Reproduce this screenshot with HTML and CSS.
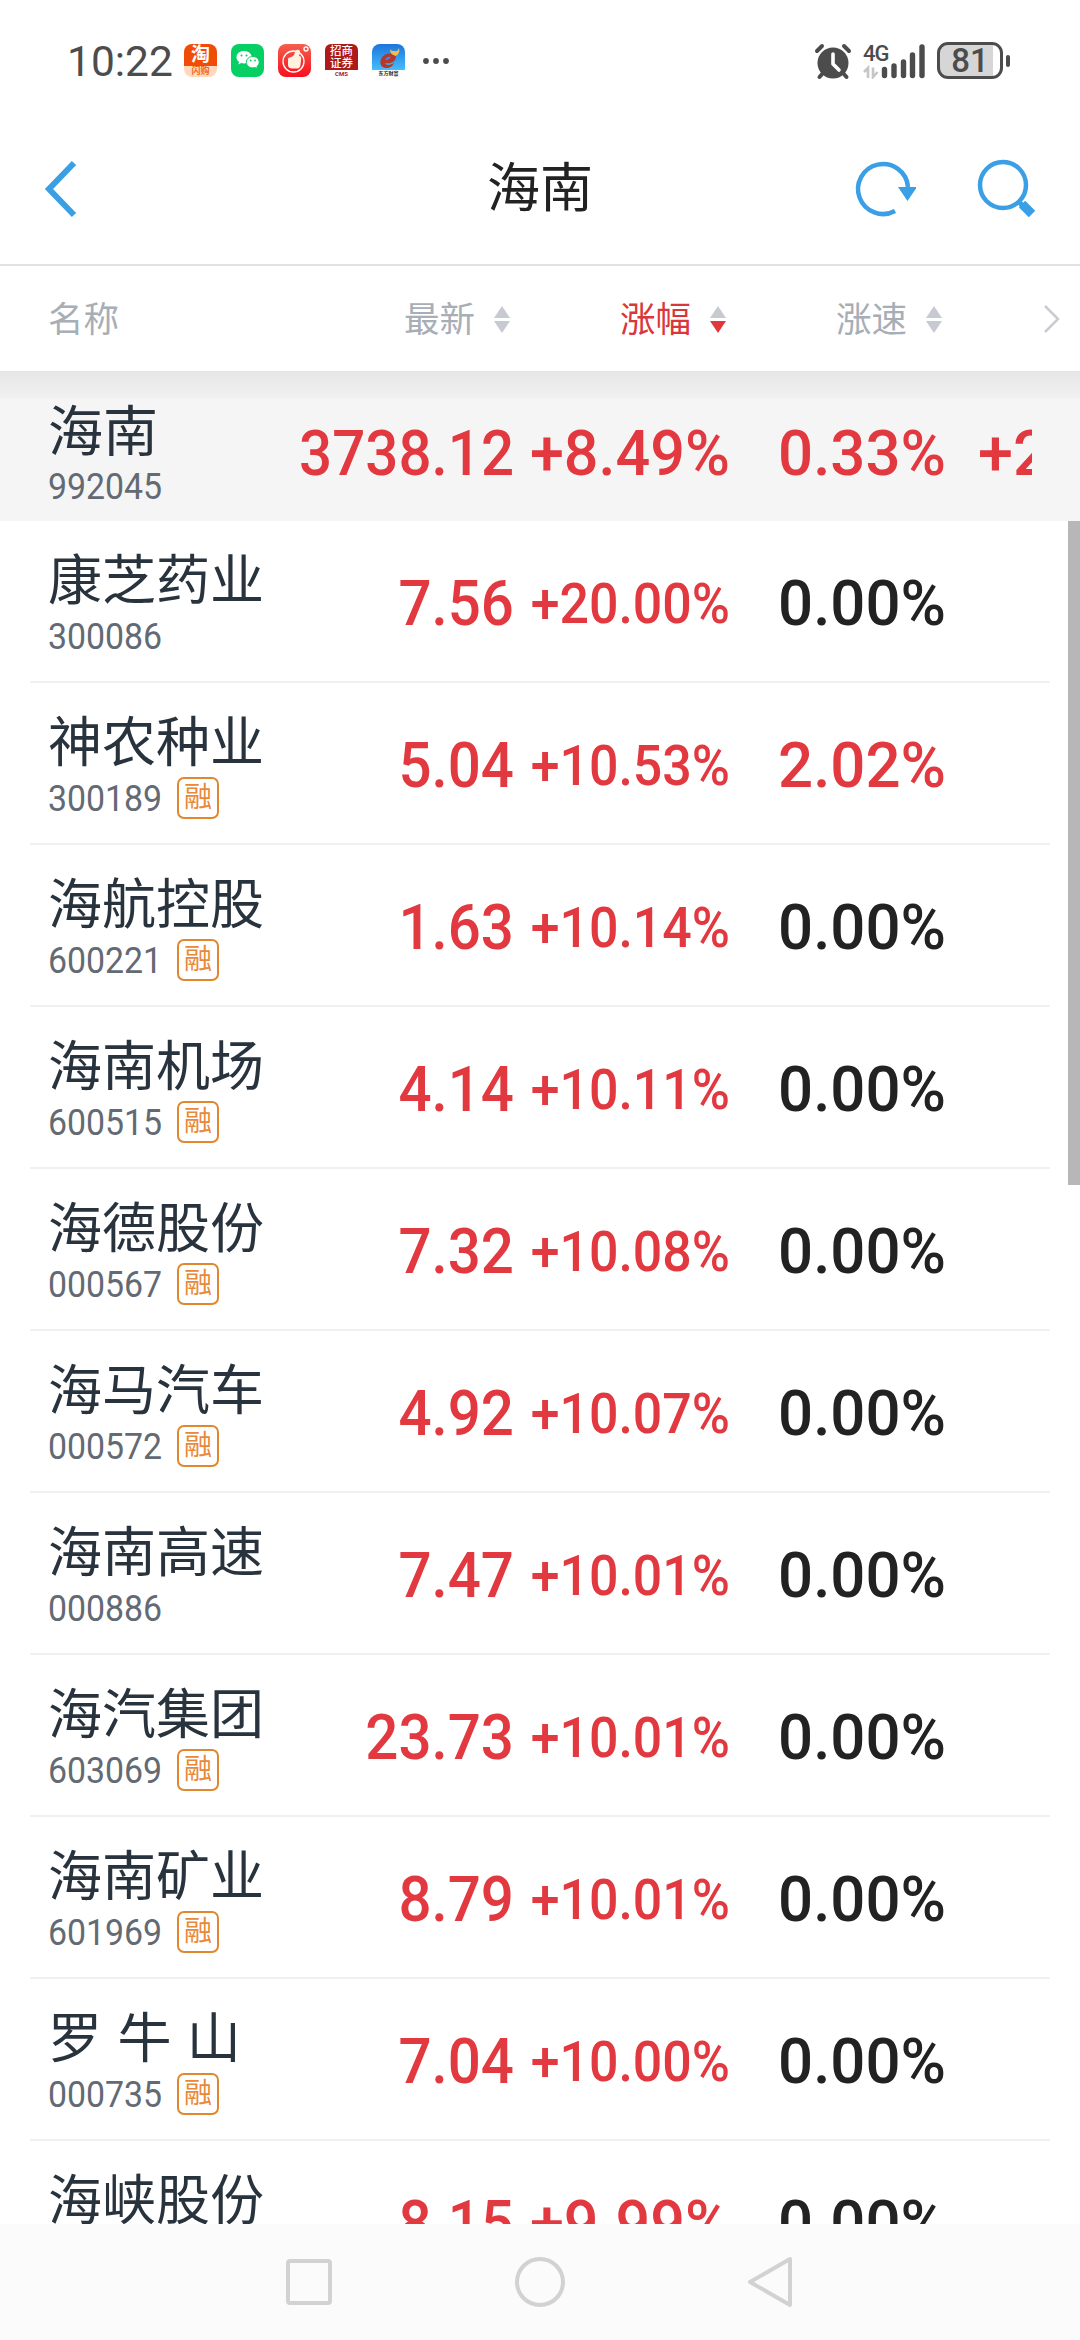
FILE: index.html
```html
<!DOCTYPE html>
<html lang="zh-CN">
<head>
  <meta charset="UTF-8" />
  <meta name="viewport" content="width=device-width, initial-scale=1.0" />
  <title>海南</title>
  <link rel="stylesheet" href="styles.css">
</head>
<body>

<div class="status-bar">
  <span class="clock">10:22</span>
  <div class="apps">
    <div class="app app-taobao"><b>淘</b><i>闪购</i></div>
    <div class="app app-wechat">
      <svg width="33" height="33" viewBox="0 0 33 33">
        <path d="M13 7C8.500 7 5.500 9.700 5.500 13.200c0 2 1 3.600 2.600 4.700l-.8 2.600 3-1.400c.9.300 1.800.4 2.700.4 4.500 0 7.700-2.700 7.700-6.200S17.500 7 13 7z" fill="#fff"/>
        <path d="M21.800 12.500c-3.700 0-6.400 2.500-6.400 5.700s2.700 5.700 6.400 5.700c.8 0 1.500-.1 2.200-.3l2.500 1.300-.7-2.200c1.400-1.100 2.400-2.700 2.400-4.500 0-3.200-2.700-5.700-6.400-5.700z" fill="#fff" stroke="#06cf63" stroke-width="1"/>
        <g fill="#06cf63"><circle cx="10.500" cy="11.500" r="1"/><circle cx="15.500" cy="11.500" r="1"/><circle cx="19.700" cy="16.500" r=".9"/><circle cx="24" cy="16.500" r=".9"/></g>
      </svg>
    </div>
    <div class="app app-red">
      <svg width="33" height="33" viewBox="0 0 33 33">
        <circle cx="15.500" cy="17.500" r="10.500" fill="none" stroke="#fff" stroke-width="1.300"/>
        <path d="M10 15c0-2 3-1 5-3 2-1 1-4 3.500-6 2-1 4 0 3.500 3l-1 3c2 0 2.500 1.500 2 4l-.5 5c-.5 3-2 3.500-4 3.500h-4c-3 0-4.500-1-4.500-3.500z" fill="#fff0e0"/>
        <circle cx="28" cy="5" r="2" fill="none" stroke="#fff" stroke-width="1.300"/>
      </svg>
    </div>
    <div class="app app-cms"><b>招商<br>证券</b><i>CMS</i></div>
    <div class="app app-east">
      <svg width="33" height="26" viewBox="0 0 33 26">
        <path d="M24 12c-4-4-12-3-15 3-2 5 1 9 5 9 4 0 7-2 8-5-3 2-8 3-9 0 6 1 11-1 11-7z" fill="#b5382b"/>
        <path d="M13 16c1-3 4-4 6-3-1 2-3 3-6 3z" fill="#2b93ea"/>
        <path d="M18 5c0 4 2 6 6 7 3-2 4-5 3-8-1 2-2 4-4 3-2 0-4 0-5-2z" fill="#f0bd55"/>
      </svg>
      <i>东方财富</i>
    </div>
  </div>
  <svg class="dots" width="28" height="8" viewBox="0 0 28 8" fill="#4c4c4c">
    <circle cx="4" cy="4" r="2.900"/><circle cx="14" cy="4" r="2.900"/><circle cx="24" cy="4" r="2.900"/>
  </svg>

  <svg class="alarm" width="38" height="38" viewBox="0 0 38 38">
    <circle cx="19" cy="21" r="15.500" fill="#4c4c4c"/>
    <g fill="none" stroke="#4c4c4c" stroke-width="4" stroke-linecap="round">
      <path d="M3 9l5-5M35 9l-5-5M9 31l-3.500 4M29 31l3.500 4"/>
    </g>
    <path d="M19 12v10l6 6" fill="none" stroke="#fff" stroke-width="3.600" stroke-linecap="round" stroke-linejoin="round"/>
  </svg>
  <div class="network">
    <span class="net-type">4G</span>
    <svg width="64" height="36" viewBox="0 0 64 36">
      <path d="M1 29l4-4v10M10 24.500V34l4.500-5" fill="none" stroke="#c6c6c6" stroke-width="2.600"/>
      <path d="M21.500 26.500v6M31 23v9.500M40.500 19v13.500M49.500 12v20.500M59 4v28.500" stroke="#4c4c4c" stroke-width="5.400" stroke-linecap="round"/>
    </svg>
  </div>
  <div class="battery"><span>81</span></div>
  <div class="battery-tip"></div>
</div>

<div class="nav-header">
  <svg class="back" width="40" height="64" viewBox="0 0 40 64">
    <path d="M35 7L10 33l25 26" fill="none" stroke="#3a9fe5" stroke-width="6"/>
  </svg>
  <h1>海南</h1>
  <div class="actions">
    <svg width="64" height="64" viewBox="0 0 64 64">
      <path d="M43 55A25 25 0 1 1 56 31" fill="none" stroke="#3a9fe5" stroke-width="4.500"/>
      <path d="M46 31h19l-9.500 14z" fill="#3a9fe5"/>
    </svg>
    <svg width="64" height="64" viewBox="0 0 64 64">
      <circle cx="29" cy="29" r="23" fill="none" stroke="#3a9fe5" stroke-width="4.500"/>
      <path d="M44.500 45.500l4 4" stroke="#3a9fe5" stroke-width="5"/>
      <path d="M48 48l10 10" stroke="#3a9fe5" stroke-width="9"/>
    </svg>
  </div>
</div>

<div class="table-head">
  <span class="th-name">名称</span>
  <span class="th">最新 <i class="sort"></i></span>
  <span class="th th-active">涨幅 <i class="sort"></i></span>
  <span class="th">涨速 <i class="sort"></i></span>
  <svg class="more" width="20" height="30" viewBox="0 0 20 30">
    <path d="M3 2l13 13L3 28" fill="none" stroke="#c9ccd1" stroke-width="2.500"/>
  </svg>
</div>

<div class="row row-index">
  <div class="stock"><div class="name">海南</div><div class="meta"><span class="code">992045</span></div></div>
  <div class="price">3738.12</div>
  <div class="pct pct-big">+8.49%</div>
  <div class="speed up">0.33%</div>
  <div class="extra">+2</div>
</div>

<div class="list">
  <div class="scrollbar"></div>
  <div class="row">
    <div class="stock"><div class="name">康芝药业</div><div class="meta"><span class="code">300086</span></div></div>
    <div class="price">7.56</div>
    <div class="pct">+20.00%</div>
    <div class="speed">0.00%</div>
  </div>
  <div class="row">
    <div class="stock"><div class="name">神农种业</div><div class="meta"><span class="code">300189</span><span class="tag">融</span></div></div>
    <div class="price">5.04</div>
    <div class="pct">+10.53%</div>
    <div class="speed up">2.02%</div>
  </div>
  <div class="row">
    <div class="stock"><div class="name">海航控股</div><div class="meta"><span class="code">600221</span><span class="tag">融</span></div></div>
    <div class="price">1.63</div>
    <div class="pct">+10.14%</div>
    <div class="speed">0.00%</div>
  </div>
  <div class="row">
    <div class="stock"><div class="name">海南机场</div><div class="meta"><span class="code">600515</span><span class="tag">融</span></div></div>
    <div class="price">4.14</div>
    <div class="pct">+10.11%</div>
    <div class="speed">0.00%</div>
  </div>
  <div class="row">
    <div class="stock"><div class="name">海德股份</div><div class="meta"><span class="code">000567</span><span class="tag">融</span></div></div>
    <div class="price">7.32</div>
    <div class="pct">+10.08%</div>
    <div class="speed">0.00%</div>
  </div>
  <div class="row">
    <div class="stock"><div class="name">海马汽车</div><div class="meta"><span class="code">000572</span><span class="tag">融</span></div></div>
    <div class="price">4.92</div>
    <div class="pct">+10.07%</div>
    <div class="speed">0.00%</div>
  </div>
  <div class="row">
    <div class="stock"><div class="name">海南高速</div><div class="meta"><span class="code">000886</span></div></div>
    <div class="price">7.47</div>
    <div class="pct">+10.01%</div>
    <div class="speed">0.00%</div>
  </div>
  <div class="row">
    <div class="stock"><div class="name">海汽集团</div><div class="meta"><span class="code">603069</span><span class="tag">融</span></div></div>
    <div class="price">23.73</div>
    <div class="pct">+10.01%</div>
    <div class="speed">0.00%</div>
  </div>
  <div class="row">
    <div class="stock"><div class="name">海南矿业</div><div class="meta"><span class="code">601969</span><span class="tag">融</span></div></div>
    <div class="price">8.79</div>
    <div class="pct">+10.01%</div>
    <div class="speed">0.00%</div>
  </div>
  <div class="row">
    <div class="stock"><div class="name">罗 牛 山</div><div class="meta"><span class="code">000735</span><span class="tag">融</span></div></div>
    <div class="price">7.04</div>
    <div class="pct">+10.00%</div>
    <div class="speed">0.00%</div>
  </div>
  <div class="row">
    <div class="stock"><div class="name">海峡股份</div></div>
    <div class="price">8.15</div>
    <div class="pct pct-big">+9.99%</div>
    <div class="speed">0.00%</div>
  </div>
</div>

<div class="system-nav">
  <svg width="56" height="56" viewBox="0 0 56 56"><rect x="7" y="7" width="42" height="42" rx="2"/></svg>
  <svg width="56" height="56" viewBox="0 0 56 56"><circle cx="28" cy="28" r="23"/></svg>
  <svg width="56" height="56" viewBox="0 0 56 56"><path d="M47 5v46L7 28z"/></svg>
</div>

</body>
</html>
```
FILE: styles.css
```css
* {
  box-sizing: border-box;
}

body {
  margin: 0;
  width: 1080px;
  height: 2340px;
  overflow: hidden;
  display: flex;
  flex-direction: column;
  background-color: #fff;
  font-family: Roboto, "Noto Sans CJK SC", sans-serif;
}

i {
  font-style: normal;
}

svg {
  display: block;
  flex: none;
}

/* status bar */
.status-bar {
  height: 112px;
  padding: 9px 70px 0 67px;
  display: flex;
  align-items: center;
  color: #4c4c4c;
}

.clock {
  width: 117px;
  padding-top: 2px;
  font-size: 42.500px;
  line-height: 50px;
  white-space: nowrap;
}

.apps {
  display: flex;
  gap: 14px;
}

.app {
  width: 33px;
  height: 33px;
  border-radius: 8px;
  overflow: hidden;
  text-align: center;
  color: #fff;
}

.app b, .app i {
  display: block;
}

.app-taobao { background: linear-gradient(#f04c08 0 66%, #ffd9bd 66%); }
.app-taobao b { font-size: 19px; line-height: 22px; }
.app-taobao i { font-size: 9px; line-height: 11px; font-weight: bold; color: #f0691e; }
.app-wechat { background-color: #06cf63; }
.app-red { background: linear-gradient(#f4604e, #f70f1d); }
.app-cms { background: linear-gradient(#ac1a1b 0 80%, #fff 80%); border-radius: 6px; }
.app-cms b { font-size: 11.500px; line-height: 12px; height: 27px; padding-top: 1px; font-weight: 500; }
.app-cms i { font-size: 6px; line-height: 6px; font-weight: bold; color: #ac1a1b; }
.app-east { background: linear-gradient(#1c74dc, #45bdfb 78%, #fff 78%); }
.app-east i { font-size: 5px; line-height: 6px; font-weight: bold; color: #222; }

.dots {
  margin-left: 17px;
}

.alarm {
  margin: 0 11px 0 auto;
}

.network {
  position: relative;
  width: 63px;
  margin-right: 11px;
}

.net-type {
  position: absolute;
  left: 0;
  top: 0;
  font-size: 22px;
  line-height: 22px;
  font-weight: 500;
  letter-spacing: -1px;
}

.battery {
  width: 66px;
  height: 37px;
  border: 3px solid #4c4c4c;
  border-radius: 11px;
  background: linear-gradient(90deg, #d6d6d6 53px, #fff 53px);
  font-size: 33px;
  line-height: 32px;
  font-weight: 500;
  text-align: center;
}

.battery-tip {
  width: 4px;
  height: 12px;
  margin-left: 3px;
  border-radius: 2px;
  background-color: #4c4c4c;
}

/* header */
.nav-header {
  height: 154px;
  border-bottom: 2px solid #e2e2e2;
  padding: 0 42px 0 39px;
  display: grid;
  grid-template-columns: 200px 1fr 200px;
  align-items: center;
}

.nav-header h1 {
  margin: 2px 0 0 3px;
  font-size: 53px;
  line-height: 60px;
  font-weight: 400;
  color: #222;
  text-align: center;
}

.actions {
  display: flex;
  justify-content: flex-end;
  gap: 58px;
}

/* table header */
.table-head {
  height: 105px;
  padding: 0 18px 0 48px;
  display: grid;
  grid-template-columns: 249px 216px 216px 216px 1fr;
  align-items: center;
  font-size: 35.500px;
  line-height: 50px;
  color: #a7aeb6;
}

.th-name, .th {
  margin-top: 2px;
}

.th {
  display: flex;
  align-items: center;
  justify-content: flex-end;
  gap: 19px;
  padding-right: 3px;
}

.th-active {
  color: #d9373c;
}

.sort {
  display: flex;
  flex-direction: column;
  gap: 3px;
}

.sort::before, .sort::after {
  content: "";
  border: 8px solid transparent;
}

.sort::before { border-top: 0; border-bottom: 12px solid #c6cad1; }
.sort::after { border-bottom: 0; border-top: 12px solid #c6cad1; }
.th-active .sort::after { border-top-color: #e2383c; }

.more {
  justify-self: end;
}

/* rows */
.row {
  position: relative;
  height: 162px;
  flex: none;
  padding-left: 48px;
  display: grid;
  grid-template-columns: 220px 246px 216px 216px 1fr;
  color: #e2383f;
}

.list .row::after {
  content: "";
  position: absolute;
  left: 30px;
  right: 30px;
  bottom: 0;
  height: 2px;
  background-color: #f0f0f0;
}

.row-index {
  height: 150px;
  background: linear-gradient(#e6e6e6, #f1f1f1 27px, #f5f5f5 28px);
}

.name {
  margin-top: 31px;
  font-size: 54px;
  line-height: 60px;
  color: #28333d;
  white-space: nowrap;
  word-spacing: 2px;
}

.row-index .name {
  font-size: 55px;
}

.meta {
  height: 42px;
  margin-top: 3px;
  display: flex;
  align-items: center;
}

.code {
  width: 129px;
  padding-top: 1px;
  font-size: 36px;
  line-height: 42px;
  color: #636a74;
  transform: scaleX(.94);
  transform-origin: left;
}

.tag {
  width: 42px;
  height: 42px;
  border: 2px solid #e0872f;
  border-radius: 7px;
  font-size: 28px;
  line-height: 37px;
  text-align: center;
  color: #e8893a;
}

.price, .pct, .speed, .extra {
  height: 162px;
  padding-top: 2px;
  font-size: 63px;
  line-height: 162px;
  font-weight: 500;
  text-align: right;
  white-space: nowrap;
  transform-origin: right;
}

.price { transform: scaleX(.925); }
.pct { font-size: 55px; transform: scaleX(.943); }
.pct-big { font-size: 63px; transform: scaleX(.97); }
.speed { color: #222; transform: scaleX(.98); }
.up { color: #e2383f; }

.extra {
  width: 54px;
  margin-left: 32px;
  overflow: hidden;
  text-align: left;
}

/* stock list */
.list {
  position: relative;
  height: 1703px;
  overflow: hidden;
}

.scrollbar {
  position: absolute;
  right: 0;
  top: 0;
  width: 12px;
  height: 664px;
  background-color: #b7b7b7;
}

.system-nav {
  height: 116px;
  background-color: #fbfbfb;
  display: flex;
  justify-content: center;
  align-items: center;
  gap: 175px;
}

.system-nav svg {
  fill: none;
  stroke: #d2d2d2;
  stroke-width: 4;
  stroke-linejoin: round;
}
```
